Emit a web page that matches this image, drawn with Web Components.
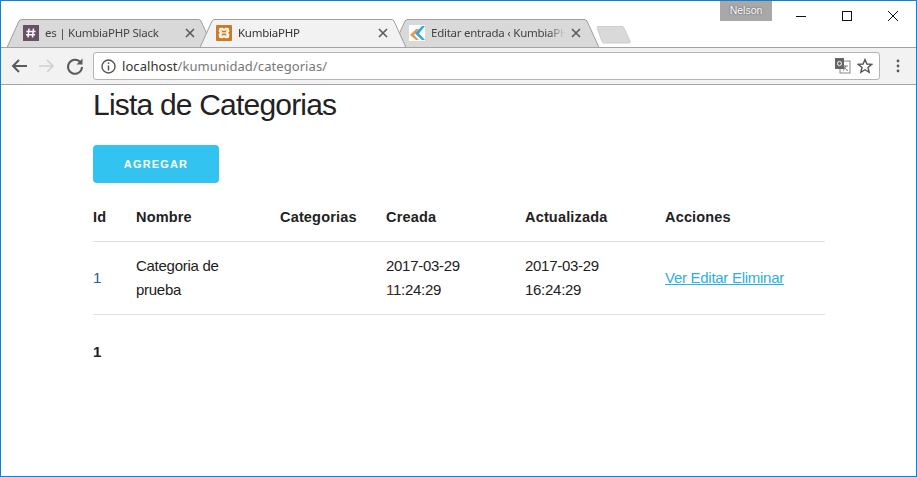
<!DOCTYPE html>
<html lang="es">
  <head>
    <meta charset="UTF-8" />
    <title>KumbiaPHP</title>
    <style>
      html, body { margin: 0; padding: 0; background: #fff; }
    </style>
  </head>
  <body>
    <browser-window>
      <tab-strip slot="tabs">
        <browser-tab>
          <svg slot="icon" width="16" height="16" viewBox="0 0 16 16"><rect width="16" height="16" fill="#6a4f69"/><path d="M6 3.500 5 12.500M10.500 3.500l-1 9M3.500 6.500h9M3 9.700h9" stroke="#fff" stroke-width="1.500" fill="none"/></svg>
          es | KumbiaPHP Slack
        </browser-tab>
        <browser-tab active>
          <svg slot="icon" width="16" height="16" viewBox="0 0 16 16"><rect width="16" height="16" rx="1" fill="#cd7a24"/><path d="M3.500 5Q3.500 3.500 5 3.500H6.500L8 5 9.500 3.500H11Q12.500 3.500 12.500 5V6.500L11 8 12.500 9.500V11Q12.500 12.500 11 12.500H9.500L8 11 6.500 12.500H5Q3.500 12.500 3.500 11V9.500L5 8 3.500 6.500z" fill="#f4d9b8" stroke="#fff" stroke-width="1.500"/><path d="M6 6.500h4M6 9.500h4" stroke="#cd7a24" stroke-width="1.400"/></svg>
          KumbiaPHP
        </browser-tab>
        <browser-tab>
          <svg slot="icon" width="16" height="16" viewBox="0 0 16 16"><rect width="16" height="16" fill="#fff"/><path d="M1 10 7 4h3l-5 6 5 5H7z" fill="#e59a4c"/><path d="M6 8.500 13 1h3l-6 7.500 6 6.500h-3z" fill="#2fa6de"/></svg>
          Editar entrada ‹ KumbiaPHP
        </browser-tab>
      </tab-strip>
      <window-controls slot="controls"></window-controls>
      <tool-bar slot="toolbar"></tool-bar>

      <page-body>
        <h-title>Lista de Categorias</h-title>
        <add-button>Agregar</add-button>
        <data-row head>
          <span>Id</span><span>Nombre</span><span>Categorias</span><span>Creada</span><span>Actualizada</span><span>Acciones</span>
        </data-row>
        <data-row>
          <span style="color:#1d5f8e">1</span>
          <span>Categoria de prueba</span>
          <span></span>
          <span>2017-03-29 <span style="color:#5c2d10">1</span>1:24:29</span>
          <span>2017-03-29 16:24:29</span>
          <span><row-link>Ver</row-link> <row-link>Editar</row-link> <row-link>Eliminar</row-link></span>
        </data-row>
        <page-number>1</page-number>
      </page-body>
    </browser-window>

    <template id="window-tmpl">
      <style>
        :host { display: block; box-sizing: border-box; width: 917px; height: 477px; border: 1px solid #1080d8; overflow: hidden; background: #fff; }
        .top { display: flex; height: 46px; position: relative; }
        .tabs { flex: 1; display: flex; align-items: flex-end; min-width: 0; }
      </style>
      <div class="top">
        <div class="tabs"><slot name="tabs"></slot></div>
        <slot name="controls"></slot>
      </div>
      <slot name="toolbar"></slot>
      <slot></slot>
    </template>

    <template id="strip-tmpl">
      <style>
        :host { display: flex; align-items: flex-end; padding-left: 6px; height: 28px; }
        .new { flex: none; width: 35px; height: 18px; margin: 0 0 3px 10px; }
      </style>
      <slot></slot>
      <svg class="new" viewBox="0 0 35 18"><path d="M1 1.500C1 .8 1.500.5 2 .5H26C27 .5 27.500 1 28 2L34 15C34.500 16.500 34 17 33 17H8C7 17 6.500 16.500 6 15.500z" fill="#d9d9d9" stroke="#cdcdcd"/></svg>
    </template>

    <template id="tab-tmpl">
      <style>
        :host { display: block; position: relative; flex: none; width: 206px; height: 28px; margin-right: -13px; font: 11.500px "Noto Sans", "Open Sans", sans-serif; letter-spacing: -.25px; color: #444; }
        :host([active]) { z-index: 2; color: #333; }
        svg.bg { position: absolute; inset: 0; width: 100%; height: 100%; }
        .bg path { fill: #d9d9d9; stroke: #9e9e9e; }
        :host([active]) .bg path { fill: #f2f2f2; }
        .row { position: relative; display: flex; align-items: center; height: 28px; padding: 0 0 1px 16px; box-sizing: border-box; }
        .icon { flex: none; width: 16px; height: 16px; margin-right: 6px; display: block; }
        ::slotted(svg) { display: block; }
        .title { width: 134px; white-space: nowrap; overflow: hidden; -webkit-mask-image: linear-gradient(to right, #000 118px, transparent 134px); }
        .x { flex: none; width: 10px; height: 10px; margin-left: 6px; }
      </style>
      <svg class="bg" viewBox="0 0 206 28" preserveAspectRatio="none"><path d="M0 28.500 12 2Q13 .5 15 .5H191Q193 .5 194 2L206 28.500"/></svg>
      <div class="row">
        <div class="icon"><slot name="icon"></slot></div>
        <div class="title"><slot></slot></div>
        <svg class="x" viewBox="0 0 10 10"><path d="M1 1l8 8M9 1l-8 8" stroke="#5a5a5a" stroke-width="1.600"/></svg>
      </div>
    </template>

    <template id="controls-tmpl">
      <style>
        :host { display: block; flex: none; position: absolute; top: 0; right: 0; width: 196px; height: 30px; }
        .wrap { display: flex; height: 30px; }
        .user { width: 52px; height: 20px; margin-right: 1px; background: #a8a8a8; color: #fff; font: 10.500px/19px "Liberation Sans", sans-serif; text-align: center; text-shadow: 0 0 2px #444; }
        .btns { display: flex; flex: 1; padding-left: 5px; }
        .b { width: 46px; height: 30px; display: flex; align-items: center; justify-content: center; }
        svg { display: block; }
      </style>
      <div class="wrap">
        <div class="user">Nelson</div>
        <div class="btns">
          <div class="b"><svg width="10" height="10"><path d="M0 5.500h10" stroke="#111"/></svg></div>
          <div class="b"><svg width="10" height="10"><rect x=".5" y=".5" width="9" height="9" fill="none" stroke="#111"/></svg></div>
          <div class="b"><svg width="10" height="10"><path d="M0 0l10 10M10 0 0 10" stroke="#111"/></svg></div>
        </div>
      </div>
    </template>

    <template id="toolbar-tmpl">
      <style>
        :host { display: flex; align-items: center; height: 38px; box-sizing: border-box; background: #f2f2f2; border-top: 1px solid #a4a4a4; border-bottom: 1px solid #a4a4a4; padding: 0 0 0 7px; }
        .nav { flex: none; width: 22px; height: 22px; margin-right: 6px; }
        .omni { flex: none; width: 787px; height: 28px; margin-left: 1px; box-sizing: border-box; background: #fff; border: 1px solid #b4b4b4; border-radius: 3px; display: flex; align-items: center; font: 13px "Noto Sans", "Open Sans", sans-serif; letter-spacing: .07px; color: #777; }
        .info { flex: none; width: 15px; height: 15px; margin: 0 6px 0 7px; }
        .url { flex: 1; white-space: nowrap; }
        .url b { font-weight: normal; color: #333; }
        .tr { flex: none; width: 16px; height: 16px; margin-right: 6px; }
        .star { flex: none; width: 16px; height: 16px; margin-right: 6px; }
        .menu { flex: none; width: 4px; height: 14px; margin-left: 16px; }
      </style>
      <svg class="nav" viewBox="0 0 22 22"><path d="M19 11H5M11 5l-6 6 6 6" fill="none" stroke="#5a5a5a" stroke-width="2"/></svg>
      <svg class="nav" viewBox="0 0 22 22"><path d="M3 11h14M11 5l6 6-6 6" fill="none" stroke="#cfcfcf" stroke-width="1.600"/></svg>
      <svg class="nav" viewBox="0 0 22 22"><path d="M16.500 7.500A7 7 0 1 0 18 12" fill="none" stroke="#5a5a5a" stroke-width="2"/><path d="M18.500 3.500v6h-6z" fill="#5a5a5a"/></svg>
      <div class="omni">
        <svg class="info" viewBox="0 0 15 15"><circle cx="7.500" cy="7.500" r="6.500" fill="none" stroke="#555" stroke-width="1.400"/><path d="M7.500 6.500V11.500M7.500 3.500v1.600" stroke="#555" stroke-width="1.500"/></svg>
        <span class="url"><b>localhost</b>/kumunidad/categorias/</span>
        <svg class="tr" viewBox="0 0 16 16"><rect x="5" y="3" width="10" height="12" fill="#fff" stroke="#888"/><rect x="0" y="0" width="9" height="11" fill="#666"/><circle cx="4.500" cy="5.500" r="2" fill="none" stroke="#fff"/><path d="M8 8h5M10.500 8c0 2-1 3.500-2.500 4.500M9 9c1 2 2.500 3 4 3.500" fill="none" stroke="#777"/></svg>
        <svg class="star" viewBox="0 0 16 16"><path d="M8 1.500l1.900 4.500 4.800.4-3.700 3.100 1.200 4.800L8 11.700l-4.200 2.600L5 9.500 1.300 6.400l4.800-.4z" fill="none" stroke="#555" stroke-width="1.400"/></svg>
      </div>
      <svg class="menu" viewBox="0 0 4 14"><circle cx="2" cy="2" r="1.400" fill="#5a5a5a"/><circle cx="2" cy="7" r="1.400" fill="#5a5a5a"/><circle cx="2" cy="12" r="1.400" fill="#5a5a5a"/></svg>
    </template>

    <template id="body-tmpl">
      <style>
        :host { display: block; width: 732px; margin-left: 92px; font: 15px/24px "Liberation Sans", Arial, sans-serif; letter-spacing: -.28px; color: #222; }
      </style>
      <slot></slot>
    </template>

    <template id="title-tmpl">
      <style>
        :host { display: block; font: 30px/36px "Liberation Sans", Arial, sans-serif; letter-spacing: -.8px; padding-top: 2px; margin-bottom: 22px; color: #222; }
      </style>
      <slot></slot>
    </template>

    <template id="button-tmpl">
      <style>
        :host { display: flex; align-items: center; justify-content: center; width: 126px; height: 38px; margin-bottom: 10px; background: #33c3f0; border-radius: 4px; color: #fff; font: bold 11px/38px "Liberation Sans", Arial, sans-serif; letter-spacing: 1.150px; text-transform: uppercase; }
      </style>
      <slot></slot>
    </template>

    <template id="row-tmpl">
      <style>
        :host { display: grid; grid-template-columns: 43px 144px 106px 139px 140px 160px; align-items: center; padding: 12px 0; border-bottom: 1px solid #e1e1e1; }
        :host([head]) { font-weight: bold; font-size: 14.500px; letter-spacing: .17px; }
        ::slotted(span) { display: block; padding-right: 20px; }
      </style>
      <slot></slot>
    </template>

    <template id="link-tmpl">
      <style>
        :host { color: #2bb0e0; text-decoration: underline; }
      </style>
      <slot></slot>
    </template>

    <template id="number-tmpl">
      <style>
        :host { display: block; margin-top: 25px; font-weight: bold; }
      </style>
      <slot></slot>
    </template>

    <script>
      // every element just clones its template into an open shadow root
      function plain(tag, tmplId) {
        customElements.define(tag, class extends HTMLElement {
          constructor() {
            super();
            let shadow = this.attachShadow({ mode: "open" });
            shadow.appendChild(document.getElementById(tmplId).content.cloneNode(true));
          }
        });
      }

      plain("browser-window", "window-tmpl");
      plain("tab-strip", "strip-tmpl");
      plain("browser-tab", "tab-tmpl");
      plain("window-controls", "controls-tmpl");
      plain("tool-bar", "toolbar-tmpl");
      plain("page-body", "body-tmpl");
      plain("h-title", "title-tmpl");
      plain("add-button", "button-tmpl");
      plain("data-row", "row-tmpl");
      plain("row-link", "link-tmpl");
      plain("page-number", "number-tmpl");
    </script>
  </body>
</html>
